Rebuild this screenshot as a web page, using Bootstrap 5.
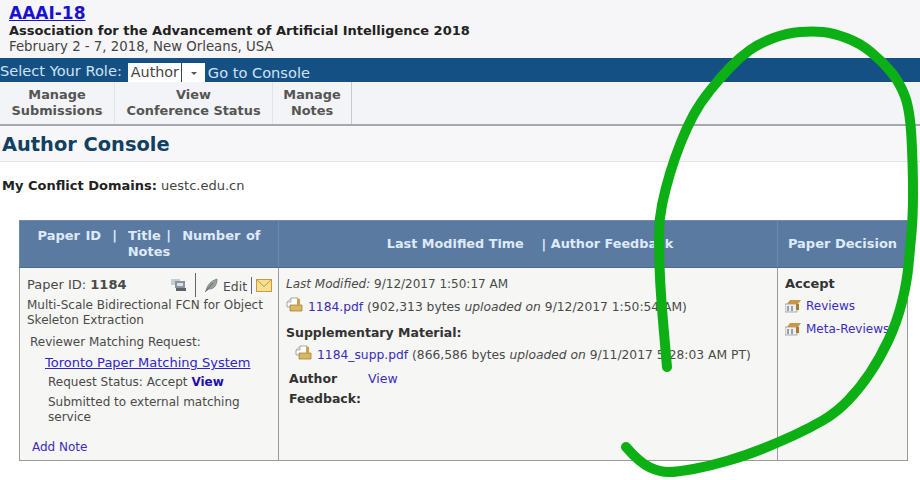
<!DOCTYPE html>
<html lang="en">
<head>
<meta charset="utf-8">
<title>Author Console</title>
<link rel="stylesheet" href="https://cdn.jsdelivr.net/npm/bootstrap@5.3.0/dist/css/bootstrap.min.css">
<style>
html,body{height:480px;overflow:hidden}
body{font-family:"DejaVu Sans",Verdana,sans-serif;font-size:12px;color:#4a4a4a;background:#fff;position:relative}
a{color:#3a2cc0;text-decoration:none}
.site-head{height:58px;background:#f6f6f8;padding:4px 0 0 9px;line-height:15px}
.site-name{font-size:17px;font-weight:700;line-height:19px;color:#1c10d0;text-decoration:underline;display:inline-block}
.site-sub{font-size:13px;font-weight:700;color:#222;line-height:16px}
.site-date{font-size:13.3px;color:#444;line-height:16px}
.role-bar{height:24px;background:#155085;color:#cfe3f5;font-size:14.6px;line-height:26px;gap:3px}
.role-label{line-height:26px;margin-right:3px}
.role-select{background:#fff;color:#444;height:19px;margin-top:5px;line-height:19px;font-size:14.3px;padding-left:3px;width:77px;flex:none}
.role-select span:first-child{border-right:1px solid #444;padding-right:2px;height:19px}
.role-caret{width:0;height:0;border-left:3px solid transparent;border-right:3px solid transparent;border-top:3px solid #555;margin:9px 0 0 9px}
.role-link{color:#cfe3f5;line-height:30px}
.top-menu{height:44px;background:#f3f4f7;border-bottom:2px solid #a6a8ac}
.top-item{height:42px;font-weight:700;font-size:12.9px;line-height:15.5px;color:#555;text-align:center;padding-top:5px;border-right:1px solid #e2e3e6}
.top-item.i1{width:115px}.top-item.i2{width:158px}.top-item.i3{width:79px;border-right-color:#c9cacc}
.page-title{height:36px;background:#f7f7f9;border-bottom:1px solid #e3e3e5;color:#12405f;font-size:19.4px;font-weight:700;line-height:38px;padding-left:2px}
.conflict{font-size:13px;color:#444;padding:15px 0 0 2px;line-height:17px;height:58px}
.conflict b{color:#222}
.paper-wrap{margin-left:19px;width:888px}
.paper-table{width:888px;height:241px;border-collapse:collapse;table-layout:fixed;background:#f6f6f4;margin:0}
.paper-table th{background:#5a7aa1;color:#dfeafa;font-size:13px;line-height:16px;text-align:center;font-weight:700;padding:0 8px;height:47px;border:1px solid #6c8aae;border-bottom:1px solid #4e6c90;vertical-align:middle}
.paper-table th.h-first{word-spacing:1px}
.paper-table th.h-mid{font-size:12.8px;padding-left:4px;padding-right:0}
.paper-table td{border:1px solid #9a9a9a;vertical-align:top;padding:0;background:#f6f6f4;line-height:15px}
.c-a{padding:0 0 0 7px!important}
.c-b{padding:0 0 0 7px!important}
.c-c{padding:0 0 0 7px!important}
.id-row{height:30px;position:relative;line-height:15px}
.id-row .id-txt{padding-top:9px;font-size:13px}
.id-tools{position:absolute;left:143px;top:5px;height:24px;display:flex;align-items:center;gap:4px}
.id-tools .sep{width:1px;height:24px;background:#666;margin-left:3px}
.id-tools .sep2{height:17px;margin:0}
.tool-feather{margin-left:4px}
.tool-edit{color:#4a4a4a;font-size:12.4px;padding-top:2px}
.review-h{margin:7px 0 0 3px;line-height:15px}
.tpms{display:block;margin:4px 0 0 18px;font-size:13px;color:#3024c8;text-decoration:underline;line-height:17px}
.req{margin:4px 0 0 21px;line-height:15px}
.req b a{color:#1c10b0}
.req-last{margin-top:5px}
.add-note{display:block;margin:15px 0 0 5px}
.line-mod{padding-top:9px;height:29px}
.file-row{display:flex;align-items:flex-start;gap:5px;height:26px;line-height:17px;font-size:12.3px}
.file-row span{padding-top:2px}
.file-row svg{flex:none}
.supp-h{font-weight:700;color:#333;margin-top:2px;font-size:12.5px;height:17px}
.supp-row{margin:3px 0 0 9px;height:24px}
.fb-grid{display:grid;grid-template-columns:79px auto;margin-left:3px;font-size:12.5px;line-height:20px;justify-content:start}
.fb-grid b{color:#333}
.decision{font-weight:700;color:#333;font-size:13px;padding-top:8px;height:27px;line-height:15px}
.rev-row{display:flex;gap:5px;height:23px;line-height:15px;padding-top:4px}
.scribble{position:absolute;left:0;top:0;width:920px;height:480px;pointer-events:none}
</style>
</head>
<body>
<header class="site-head">
  <a class="site-name" href="#">AAAI-18</a>
  <div class="site-sub">Association for the Advancement of Artificial Intelligence 2018</div>
  <div class="site-date">February 2 - 7, 2018, New Orleans, USA</div>
</header>
<div class="role-bar d-flex">
  <span class="role-label">Select Your Role:</span>
  <div class="role-select d-flex"><span>Author</span><span class="role-caret"></span></div>
  <a class="role-link" href="#">Go to Console</a>
</div>
<nav class="top-menu d-flex">
  <div class="top-item i1">Manage<br>Submissions</div>
  <div class="top-item i2">View<br>Conference Status</div>
  <div class="top-item i3">Manage<br>Notes</div>
</nav>
<h1 class="page-title m-0">Author Console</h1>
<div class="conflict"><b>My Conflict Domains:</b> uestc.edu.cn</div>
<div class="paper-wrap">
<table class="paper-table">
  <colgroup><col style="width:259px"><col style="width:499px"><col style="width:130px"></colgroup>
  <thead>
    <tr><th class="h-first">Paper ID &nbsp;|&nbsp; Title |&nbsp; Number of Notes</th><th class="h-mid">Last Modified Time &nbsp;&nbsp; | Author Feedback</th><th>Paper Decision</th></tr>
  </thead>
  <tbody>
    <tr>
      <td class="c-a">
        <div class="id-row">
          <div class="id-txt">Paper ID: <b>1184</b></div>
          <div class="id-tools">
            <svg width="18" height="14" viewBox="0 0 18 14"><rect x="1" y="1" width="9" height="6" fill="#c5ced6"/><rect x="5" y="3" width="10" height="7" fill="#8a949c"/><path d="M6 10h10v3H6z" fill="#5c6268"/><path d="M7 5h6v3H7z" fill="#dde3e8"/></svg>
            <span class="sep"></span>
            <svg class="tool-feather" width="15" height="15" viewBox="0 0 15 15"><path d="M2 13C3 7 7 3 13 1c0 5-2 10-8 10z" fill="#9aa09c" stroke="#6d726e" stroke-width=".7"/><path d="M1 14 9 5" stroke="#555" stroke-width=".8"/></svg>
            <a href="#" class="tool-edit">Edit</a>
            <span class="sep sep2"></span>
            <svg width="16" height="13" viewBox="0 0 16 13"><rect x=".5" y=".5" width="15" height="12" fill="#f6df8f" stroke="#c99a3c"/><path d="M1 1l7 6.500L15 1" fill="none" stroke="#c99a3c"/></svg>
          </div>
        </div>
        <div>Multi-Scale Bidirectional FCN for Object Skeleton Extraction</div>
        <div class="review-h">Reviewer Matching Request:</div>
        <a class="tpms" href="#">Toronto Paper Matching System</a>
        <div class="req">Request Status: Accept <b><a href="#">View</a></b></div>
        <div class="req req-last">Submitted to external matching service</div>
        <a class="add-note" href="#">Add Note</a>
      </td>
      <td class="c-b">
        <div class="line-mod"><i>Last Modified:</i> 9/12/2017 1:50:17 AM</div>
        <div class="file-row">
          <svg width="17" height="16" viewBox="0 0 17 16"><path d="M1 5l4-4h7v9H1z" fill="#fff" stroke="#8f8f8f" stroke-width=".8"/><path d="M1 5h4V1" fill="#ddd" stroke="#8f8f8f" stroke-width=".6"/><path d="M4 8h12v6H4z" fill="#d9b864" stroke="#9a7a30" stroke-width=".7"/><path d="M11 2h3v6h-3z" fill="#c9a24a"/></svg>
          <span><a href="#">1184.pdf</a> (902,313 bytes <i>uploaded on</i> 9/12/2017 1:50:54 AM)</span>
        </div>
        <div class="supp-h">Supplementary Material:</div>
        <div class="file-row supp-row">
          <svg width="17" height="16" viewBox="0 0 17 16"><path d="M1 5l4-4h7v9H1z" fill="#fff" stroke="#8f8f8f" stroke-width=".8"/><path d="M1 5h4V1" fill="#ddd" stroke="#8f8f8f" stroke-width=".6"/><path d="M4 8h12v6H4z" fill="#d9b864" stroke="#9a7a30" stroke-width=".7"/><path d="M11 2h3v6h-3z" fill="#c9a24a"/></svg>
          <span><a href="#">1184_supp.pdf</a> (866,586 bytes <i>uploaded on</i> 9/11/2017 5:28:03 AM PT)</span>
        </div>
        <div class="fb-grid"><b>Author</b><a href="#">View</a><b>Feedback:</b></div>
      </td>
      <td class="c-c">
        <div class="decision">Accept</div>
        <div class="rev-row">
          <svg width="16" height="15" viewBox="0 0 16 15"><path d="M0 5h12v8H0z" fill="#eceef0" stroke="#8a8f94" stroke-width=".7"/><path d="M2 5l3-4h11l-3 4z" fill="#c9964a"/><path d="M11 5h3v6h-3z" fill="#a97a35"/><path d="M2 7h2v5H2zM6 7h2v5H6z" fill="#9aa0a6"/></svg>
          <a href="#">Reviews</a>
        </div>
        <div class="rev-row">
          <svg width="16" height="15" viewBox="0 0 16 15"><path d="M0 5h12v8H0z" fill="#eceef0" stroke="#8a8f94" stroke-width=".7"/><path d="M2 5l3-4h11l-3 4z" fill="#c9964a"/><path d="M11 5h3v6h-3z" fill="#a97a35"/><path d="M2 7h2v5H2zM6 7h2v5H6z" fill="#9aa0a6"/></svg>
          <a href="#">Meta-Reviews</a>
        </div>
      </td>
    </tr>
  </tbody>
</table>
</div>
<svg class="scribble" viewBox="0 0 920 480" aria-hidden="true">
  <path d="M626 447Q640 463 650 467.500Q660 472 668.500 472Q677 472 693.500 469Q710 466 728.500 460.500Q747 455 762 449Q777 443 793.500 435.500Q810 428 823.500 420Q837 412 848.500 400Q860 388 870 373Q880 358 888.500 340Q897 322 902 302Q907 282 908.500 265Q910 248 911.500 232.500Q913 217 913 192Q913 167 911.500 138.500Q910 110 905 96.500Q900 83 891.500 72.500Q883 62 871.500 52.500Q860 43 846.500 38Q833 33 823 32Q813 31 800 32Q787 33 773.500 38Q760 43 750 50Q740 57 730 67.500Q720 78 710 90.500Q700 103 693.500 115Q687 127 681 142Q675 157 670 173.500Q665 190 662 205Q659 220 659 234Q659 248 659.500 265Q660 282 661.500 302Q663 322 667 367" fill="none" stroke="#0db014" stroke-width="10" stroke-linecap="round" stroke-linejoin="round"/>
</svg>
<script src="https://cdn.jsdelivr.net/npm/bootstrap@5.3.0/dist/js/bootstrap.bundle.min.js"></script>
</body>
</html>
